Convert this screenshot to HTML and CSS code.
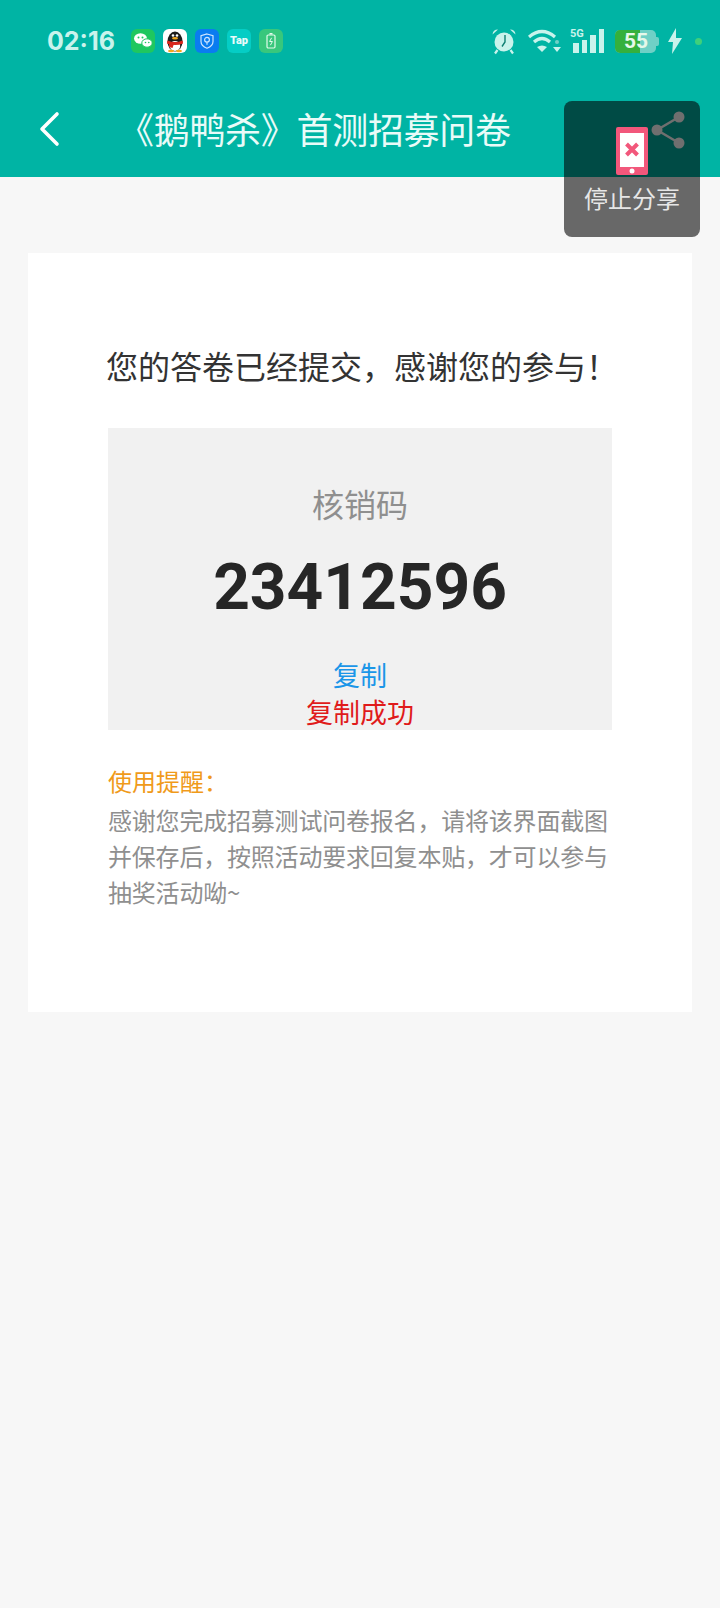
FILE: index.html
```html
<!DOCTYPE html>
<html lang="zh-CN">
<head>
    <meta charset="UTF-8">
    <meta name="viewport" content="width=device-width, initial-scale=1.0">
    <title>《鹅鸭杀》首测招募问卷</title>
    <link rel="stylesheet" href="styles.css">
</head>
<body>
    <header class="top">
        <!-- 状态栏 -->
        <div class="status">
            <span class="time">02:16</span>
            <div class="apps">
                <span class="app wechat">
                    <svg viewBox="0 0 24 24" width="24" height="24">
                        <ellipse cx="9.5" cy="9.5" rx="6.5" ry="5.2" fill="#fff"/>
                        <ellipse cx="16" cy="14" rx="5.2" ry="4.2" fill="#fff" stroke="#1fc75f"/>
                        <circle cx="7.5" cy="8.5" r="1" fill="#1fc75f"/>
                        <circle cx="11.5" cy="8.5" r="1" fill="#1fc75f"/>
                        <circle cx="14.5" cy="13.5" r=".8" fill="#1fc75f"/>
                        <circle cx="17.8" cy="13.5" r=".8" fill="#1fc75f"/>
                    </svg>
                </span>
                <span class="app qq">
                    <svg viewBox="0 0 24 24" width="24" height="24">
                        <ellipse cx="12" cy="12.5" rx="7.5" ry="10" fill="#1c1c1c"/>
                        <ellipse cx="12" cy="17" rx="5.2" ry="5" fill="#fff"/>
                        <circle cx="10" cy="6.5" r="1.3" fill="#fff"/>
                        <circle cx="14" cy="6.5" r="1.3" fill="#fff"/>
                        <ellipse cx="12" cy="9.3" rx="3" ry="1.2" fill="#f2a81d"/>
                        <path d="M4.5 11.5q7.5 3 15 0l.6 3q-7.8 3-16.200 0z" fill="#d8261c"/>
                        <path d="M6 14l5 .8-1.500 4.200-3.500-1z" fill="#d8261c"/>
                        <ellipse cx="8" cy="22" rx="3" ry="1.200" fill="#f2a81d"/>
                        <ellipse cx="16" cy="22" rx="3" ry="1.200" fill="#f2a81d"/>
                    </svg>
                </span>
                <span class="app guard">
                    <svg viewBox="0 0 24 24" width="24" height="24" fill="none" stroke="#cfe6ff" stroke-width="1.200">
                        <path d="M12 5l6 1.800v5.700q0 4.500-6 6.800-6-2.300-6-6.800V6.800z"/>
                        <circle cx="12" cy="10.800" r="2.400"/>
                        <path d="M12 13.200v2.600"/>
                    </svg>
                </span>
                <span class="app tap">Tap</span>
                <span class="app power">
                    <svg viewBox="0 0 24 24" width="24" height="24" fill="none" stroke="#e4fbec" stroke-width="1.200">
                        <rect x="8" y="6" width="8" height="13" rx="1.200"/>
                        <path d="M10.500 4.800h3" stroke-width="1.600"/>
                        <path d="M12.600 8.800l-2 3.700h2.800l-2 3.700" stroke-width="1"/>
                    </svg>
                </span>
            </div>
            <div class="sys">
                <svg class="alarm" viewBox="0 0 28 28" width="28" height="28">
                    <circle cx="14" cy="15" r="9.500" fill="#c9f3ec"/>
                    <path d="M2.500 7.500Q3 2.500 8 2.500z" fill="#c9f3ec"/>
                    <path d="M25.500 7.500Q25 2.500 20 2.500z" fill="#c9f3ec"/>
                    <path d="M7.500 23l-2.500 3.500M20.500 23l2.500 3.500" stroke="#c9f3ec" stroke-width="2.200"/>
                    <path d="M15 8v7l-3 4.500" fill="none" stroke="#0f7f73" stroke-width="1.400"/>
                </svg>
                <svg class="wifi" viewBox="0 0 34 24" width="34" height="24" fill="none" stroke="#c9f3ec" stroke-width="3.200">
                    <path d="M1 8q13-11 26 0"/>
                    <path d="M6 13q8-7 16 0"/>
                    <path d="M14 23l-5-5q5-3 10 0z" fill="#c9f3ec" stroke="none"/>
                    <circle cx="29" cy="13" r="2" fill="#6fd0c6" stroke="none"/>
                    <path d="M25 18h8l-4 5z" fill="#c9f3ec" stroke="none"/>
                </svg>
                <div class="signal">
                    <span class="five-g">5G</span>
                    <span class="bar b1"></span>
                    <span class="bar b2"></span>
                    <span class="bar b3"></span>
                    <span class="bar b4"></span>
                </div>
                <div class="battery">
                    <span class="level"></span>
                    <span class="pct">55</span>
                </div>
                <svg class="bolt" viewBox="0 0 16 26" width="16" height="26">
                    <path d="M9 0L1 14h5L5 26l10-16H9z" fill="#c9f3ec"/>
                </svg>
                <span class="dot"></span>
            </div>
        </div>
        <!-- 标题栏 -->
        <div class="toolbar">
            <svg class="back" viewBox="0 0 24 36" width="24" height="36" fill="none" stroke="#fff" stroke-width="3.600" stroke-linecap="round" stroke-linejoin="round">
                <path d="M19 3L4 18l15 15"/>
            </svg>
            <h1>《鹅鸭杀》首测招募问卷</h1>
        </div>
    </header>

    <!-- 悬浮的停止分享 -->
    <div class="float-share">
        <svg class="share" viewBox="0 0 36 40" width="36" height="40">
            <path d="M29 7L7 20l22 13" fill="none" stroke="#6f6f6f" stroke-width="2.500"/>
            <circle cx="29" cy="7" r="5.500" fill="#6f6f6f"/>
            <circle cx="7" cy="20" r="5.500" fill="#6f6f6f"/>
            <circle cx="29" cy="33" r="5.500" fill="#6f6f6f"/>
        </svg>
        <svg class="phone" viewBox="0 0 32 48" width="32" height="48">
            <rect width="32" height="48" rx="2" fill="#f2577b"/>
            <rect x="4" y="6" width="24" height="34" fill="#fff"/>
            <path d="M10.500 17l11 11M21.500 17l-11 11" stroke="#f2577b" stroke-width="4"/>
            <circle cx="16" cy="44" r="2.500" fill="#fff"/>
        </svg>
        <span class="stop">停止分享</span>
    </div>

    <main class="card">
        <p class="done">您的答卷已经提交，感谢您的参与！</p>
        <div class="code-box">
            <div class="code-label">核销码</div>
            <div class="code">23412596</div>
            <div class="copy">复制</div>
            <div class="copied">复制成功</div>
        </div>
        <div class="tip-title">使用提醒：</div>
        <p class="tip">感谢您完成招募测试问卷报名，请将该界面截图并保存后，按照活动要求回复本贴，才可以参与抽奖活动呦~</p>
    </main>
</body>
</html>
```

FILE: styles.css
```css
* {
    box-sizing: border-box;
}
body {
    margin: 0;
    height: 1608px;
    background-color: #f7f7f7;
    font-family: "Noto Sans CJK SC", Roboto, sans-serif;
    position: relative;
    overflow: hidden;
}
.top {
    height: 177px;
    background-color: #00b4a4;
}
.status {
    height: 82px;
    padding: 0 18px 0 47px;
    display: flex;
    align-items: center;
    color: #c9f3ec;
}
.time {
    font-family: Inter, Roboto, sans-serif;
    font-size: 25px;
    font-weight: 700;
    width: 84px;
}
.apps {
    display: flex;
    gap: 8px;
}
.app {
    width: 24px;
    height: 24px;
    border-radius: 6px;
    display: block;
    overflow: hidden;
}
.app svg {
    display: block;
}
.wechat {
    background-color: #1fc75f;
}
.qq {
    background-color: #fff;
}
.guard {
    background-color: #0a7cf0;
}
.tap {
    background-color: #05cdc5;
    color: #e8fbfa;
    font-family: Roboto, sans-serif;
    font-size: 11px;
    font-weight: 900;
    line-height: 24px;
    text-align: center;
}
.power {
    background-color: #38c77c;
}
.sys {
    margin-left: auto;
    display: flex;
    align-items: center;
}
.alarm {
    margin-right: 10px;
}
.wifi {
    margin-right: 8px;
}
.signal {
    width: 34px;
    height: 24px;
    display: flex;
    align-items: flex-end;
    justify-content: flex-end;
    gap: 3px;
    position: relative;
    margin-right: 11px;
}
.five-g {
    position: absolute;
    left: 0;
    top: -2px;
    font-family: Roboto, sans-serif;
    font-size: 11px;
    font-weight: 700;
    line-height: 13px;
}
.bar {
    width: 5.500px;
    background-color: #c9f3ec;
}
.b1 {
    height: 10px;
}
.b2 {
    height: 13px;
}
.b3 {
    height: 18px;
}
.b4 {
    height: 24px;
}
.battery {
    width: 41px;
    height: 23px;
    border-radius: 5px;
    background-color: #6fd0c6;
    position: relative;
    margin-right: 11px;
}
.battery::after {
    content: "";
    position: absolute;
    right: -3px;
    top: 7px;
    width: 3px;
    height: 9px;
    border-radius: 0 2px 2px 0;
    background-color: #6fd0c6;
}
.level {
    display: block;
    width: 25px;
    height: 100%;
    border-radius: 5px 0 0 5px;
    background-color: #35b03c;
}
.pct {
    position: absolute;
    left: 9px;
    top: 0;
    font-family: Roboto, sans-serif;
    font-size: 21px;
    font-weight: 700;
    line-height: 23px;
    color: #e6f8ea;
}
.bolt {
    margin-right: 12px;
}
.dot {
    width: 7px;
    height: 7px;
    border-radius: 50%;
    background-color: #3fd07a;
}
.toolbar {
    height: 95px;
    padding: 0 0 3px 38px;
    display: flex;
    align-items: center;
    color: #fff;
}
.back {
    margin-top: 2px;
}
.toolbar h1 {
    margin: 0 0 0 56px;
    font-size: 36px;
    font-weight: 400;
    letter-spacing: -0.3px;
    line-height: 50px;
    color: #e9fbf8;
}
.float-share {
    position: absolute;
    left: 564px;
    top: 101px;
    width: 136px;
    height: 136px;
    border-radius: 8px;
    background-color: rgba(0, 0, 0, 0.58);
}
.share {
    position: absolute;
    left: 86px;
    top: 9px;
}
.phone {
    position: absolute;
    left: 52px;
    top: 26px;
}
.stop {
    position: absolute;
    left: 0;
    right: 0;
    top: 80px;
    text-align: center;
    font-size: 24px;
    line-height: 34px;
    color: #e6e6e6;
}
.card {
    margin: 76px 28px 0;
    height: 759px;
    padding: 90px 80px 0;
    background-color: #fff;
}
.done {
    margin: 0 0 0 -2px;
    font-size: 32px;
    line-height: 44px;
    color: #333;
    white-space: nowrap;
}
.code-box {
    margin-top: 41px;
    height: 302px;
    padding-top: 52px;
    background-color: #f1f1f1;
    text-align: center;
}
.code-label {
    font-size: 32px;
    line-height: 46px;
    color: #8f8f8f;
}
.code {
    margin-top: 24px;
    font-family: Roboto, sans-serif;
    font-size: 64px;
    font-weight: 700;
    line-height: 76px;
    color: #262626;
}
.copy {
    margin-top: 30px;
    font-size: 27px;
    line-height: 37px;
    color: #1b96e8;
}
.copied {
    font-size: 27px;
    line-height: 37px;
    color: #e01b1b;
}
.tip-title {
    margin-top: 33px;
    font-size: 24px;
    line-height: 36px;
    color: #f09a1a;
}
.tip {
    margin: 3px 0 0;
    font-size: 24px;
    letter-spacing: -0.2px;
    line-height: 36px;
    color: #8f8f8f;
}
```
